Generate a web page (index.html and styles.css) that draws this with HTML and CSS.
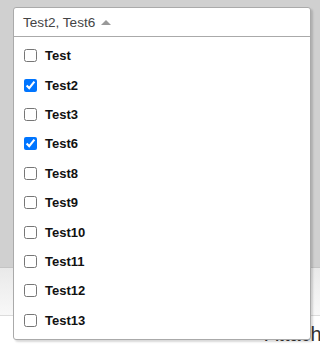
FILE: index.html
```html
<!DOCTYPE html>
<html>
<head>
<meta charset="utf-8">
<link rel="stylesheet" href="styles.css">
</head>
<body>
<div class="page">
  <div class="backdrop"></div>
  <div class="toolbar"></div>
  <div class="content"><span class="attach">Attach</span></div>
</div>
<div class="dropdown">
  <div class="dd-header"><span class="dd-value">Test2, Test6</span><span class="caret"></span></div>
  <ul class="dd-list">
    <li class="dd-item"><input type="checkbox"><span>Test</span></li>
    <li class="dd-item"><input type="checkbox" checked><span>Test2</span></li>
    <li class="dd-item"><input type="checkbox"><span>Test3</span></li>
    <li class="dd-item"><input type="checkbox" checked><span>Test6</span></li>
    <li class="dd-item"><input type="checkbox"><span>Test8</span></li>
    <li class="dd-item"><input type="checkbox"><span>Test9</span></li>
    <li class="dd-item"><input type="checkbox"><span>Test10</span></li>
    <li class="dd-item"><input type="checkbox"><span>Test11</span></li>
    <li class="dd-item"><input type="checkbox"><span>Test12</span></li>
    <li class="dd-item"><input type="checkbox"><span>Test13</span></li>
  </ul>
</div>
</body>
</html>
```
FILE: styles.css
```css
html, body {
  margin: 0;
  padding: 0;
  width: 320px;
  height: 346px;
  overflow: hidden;
  font-family: "Liberation Sans", Arial, sans-serif;
  background: #fff;
}
.page {
  display: flex;
  flex-direction: column;
  height: 346px;
}
.backdrop {
  height: 276px;
  background: #d0d0d0;
  border-bottom: 1px solid #c4c4c4;
}
.toolbar {
  height: 49px;
  background: linear-gradient(#e9e9e9, #f8f8f8);
  border-bottom: 1px solid #dcdcdc;
}
.content {
  flex: 1;
  display: flex;
  padding-top: 6px;
}
.attach {
  margin-left: 265px;
  font-size: 20px;
  color: #333;
  line-height: 24px;
  white-space: nowrap;
}
.dropdown {
  position: absolute;
  left: 13px;
  top: 7px;
  width: 296px;
  height: 331px;
  background: #fff;
  border: 1px solid #aaa;
  border-radius: 3px;
  box-shadow: 2px 2px 2px rgba(0,0,0,0.15);
  display: flex;
  flex-direction: column;
}
.dd-header {
  border-bottom: 1px solid #aaa;
  display: flex;
  align-items: center;
  padding: 1px 0 0 9px;
  box-sizing: border-box;
  height: 29px;
}
.dd-value {
  font-size: 13.6px;
  color: #444;
}
.caret {
  width: 0;
  height: 0;
  margin-left: 6px;
  border-left: 5px solid transparent;
  border-right: 5px solid transparent;
  border-bottom: 5px solid #999;
}
.dd-list {
  list-style: none;
  margin: 0;
  padding: 4px 0 0 0;
}
.dd-item {
  height: 29.4px;
  display: flex;
  align-items: center;
  padding-left: 10px;
  gap: 8px;
  font-size: 13px;
  font-weight: bold;
  color: #111;
}
.dd-item input {
  margin: 0;
  width: 13px;
  height: 13px;
}
```
